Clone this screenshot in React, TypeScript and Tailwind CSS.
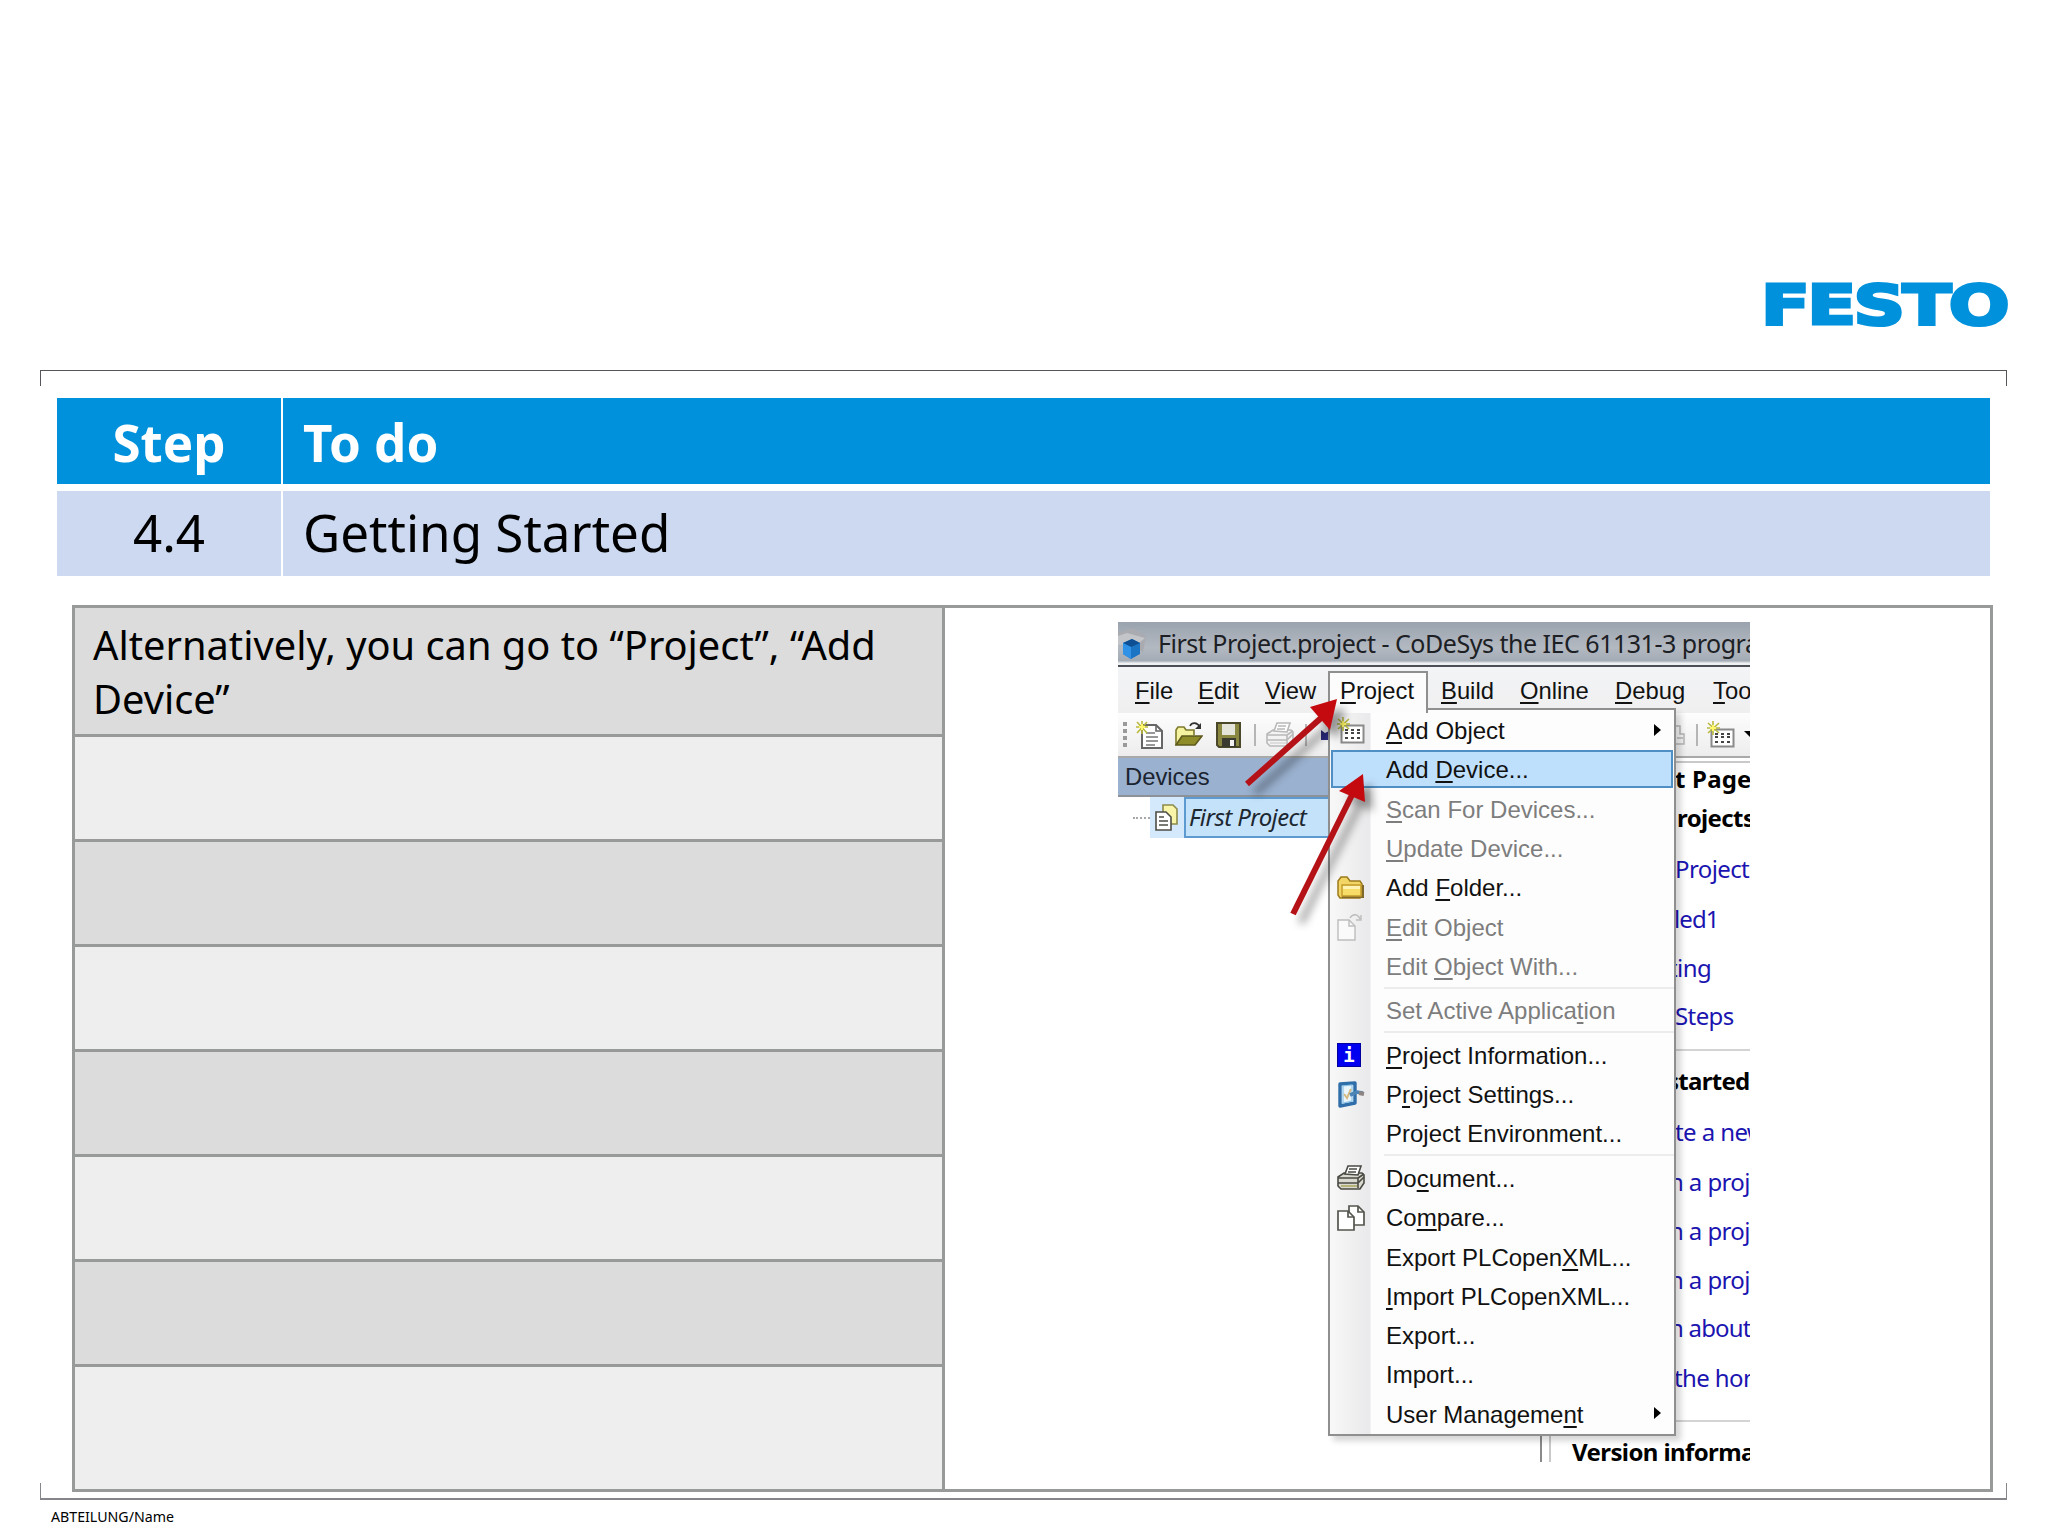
import type { ReactNode } from 'react';

type MenuEntry = {
  label?: ReactNode;
  icon?: ReactNode;
  disabled?: boolean;
  active?: boolean;
  submenu?: boolean;
};

function K({ children }: { children: ReactNode }) {
  return <span className="underline decoration-2 underline-offset-[3px] [text-decoration-skip-ink:none]">{children}</span>;
}

function GridIcon() {
  return (
    <svg width="28" height="28" viewBox="0 0 28 28" fill="none">
      <rect x="4.5" y="8.5" width="22" height="17" fill="#fff" stroke="#8a8a8a" strokeWidth="2" />
      <path d="M8 13h3M14 13h3M20 13h3M8 16h3M14 16h3M20 16h3M8 21h3M14 21h3M20 21h3" stroke="#444" strokeWidth="2" />
      <path d="M6 0v14M0 7h13M1 2l11 10M12 2L1 12" stroke="#b9b93c" strokeWidth="1.6" />
      <path d="M6 4v6M3 7h6" stroke="#fff86a" strokeWidth="2" />
    </svg>
  );
}

function NewIcon() {
  return (
    <svg width="28" height="28" viewBox="0 0 28 28" fill="none">
      <path d="M6 4h14l6 6v17H6z" fill="#fff" stroke="#666" strokeWidth="2" />
      <path d="M20 4v6h6" stroke="#666" strokeWidth="1.6" />
      <path d="M10 12h9M10 16h12M10 20h12M10 24h9" stroke="#777" strokeWidth="1.5" />
      <path d="M6 0v13M0 6h12M1 1l10 11M11 1L1 12" stroke="#b9b93c" strokeWidth="1.6" />
      <path d="M6 3v6M3 6h6" stroke="#fff86a" strokeWidth="2" />
    </svg>
  );
}

function OpenIcon() {
  return (
    <svg width="28" height="28" viewBox="0 0 28 28" fill="none">
      <path d="M1 24V9l2-3h6l2 3h8v5" fill="#f6f3a0" stroke="#7c7a2c" strokeWidth="1.6" />
      <path d="M1 24l6-9h20l-7 9z" fill="#8f8c2a" stroke="#5d5a1c" strokeWidth="1.6" />
      <path d="M15 5c2-4 7-4 10 1" stroke="#333" strokeWidth="1.6" />
      <path d="M26 2v6h-6z" fill="#333" />
    </svg>
  );
}

function SaveIcon() {
  return (
    <svg width="26" height="26" viewBox="0 0 26 26">
      <path d="M1 1h23v24H3l-2-2z" fill="#8a8740" stroke="#4a4828" strokeWidth="2" />
      <rect x="6" y="2" width="13" height="11" fill="#e4e4da" />
      <rect x="6" y="16" width="14" height="9" fill="#3b3a30" />
      <rect x="14" y="18" width="4" height="6" fill="#f2f2f2" />
    </svg>
  );
}

function PrinterIcon({ faded }: { faded?: boolean }) {
  const line = faded ? '#b9b9b9' : '#4a4a44';
  return (
    <svg width="28" height="26" viewBox="0 0 28 26" fill="none">
      <path d="M1 12l6-4h18l2 2v8l-4 6H4l-3-3z" fill={faded ? '#f3f3f3' : '#d9d9cf'} stroke={line} strokeWidth="1.6" />
      <path d="M8 9l3-8h13l-3 9z" fill="#fff" stroke={line} strokeWidth="1.6" />
      <path d="M12 4h8M11 7h8" stroke={line} strokeWidth="1.4" />
      <path d="M1 13h20v10M21 13l6-4M1 18h20l6-6" stroke={line} strokeWidth="1.6" />
      <path d="M4 21h16" stroke={faded ? '#ddd' : '#b5b377'} strokeWidth="2" />
    </svg>
  );
}

function FolderIcon() {
  return (
    <svg width="28" height="23" viewBox="0 0 28 23">
      <path d="M1 19V5l3-4h6l3 4h10l2 3v12l-2 2H3z" fill="#f3d566" stroke="#9c7a1c" strokeWidth="1.5" />
      <path d="M26 9v12H5" fill="none" stroke="#80682a" strokeWidth="2" />
      <path d="M5 9h19v11H5z" fill="#f7dc67" stroke="#c29a2b" strokeWidth="1.4" />
      <path d="M6 10h17v3H6z" fill="#fff3b4" />
    </svg>
  );
}

function EditIcon() {
  return (
    <svg width="26" height="27" viewBox="0 0 26 27" fill="none" stroke="#bdbdbd" strokeWidth="1.4">
      <path d="M1 6h11l6 6v14H1z" fill="#fafafa" />
      <path d="M12 6v6h6" />
      <path d="M13 4c3-5 8-4 10 1M24 1v5h-5" />
    </svg>
  );
}

function InfoIcon() {
  return (
    <div className="flex h-6 w-6 items-center justify-center border border-[#0000a0] bg-[#0000f0] font-['DejaVu_Sans_Mono',monospace] text-[19px] font-bold leading-none text-white">
      i
    </div>
  );
}

function SettingsIcon() {
  return (
    <svg width="28" height="27" viewBox="0 0 28 27" fill="none">
      <path d="M3 3l15-1v20L3 25z" fill="#e9f4fb" stroke="#2f6ea8" strokeWidth="3.4" strokeLinejoin="round" />
      <path d="M6 5l9-1v16l-9 2z" stroke="#8cc4ea" strokeWidth="1.2" />
      <path d="M7 13l3 4 4-9" stroke="#d5b980" strokeWidth="2" />
      <path d="M13 14l7-3 6 1" stroke="#4b84b5" strokeWidth="3.6" />
      <path d="M22 12l5 1" stroke="#8c8583" strokeWidth="4" />
    </svg>
  );
}

function CompareIcon() {
  return (
    <svg width="28" height="26" viewBox="0 0 28 26" fill="#fff" stroke="#55554f" strokeWidth="1.7">
      <path d="M12 1h9l6 6v13H12z" />
      <path d="M21 1v6h6" fill="none" />
      <path d="M1 6h10l6 6v13H1z" />
      <path d="M11 6v6h6" fill="none" />
    </svg>
  );
}

function ProjectIcon() {
  return (
    <svg width="24" height="27" viewBox="0 0 24 27" stroke="#4e4e46" strokeWidth="1.6">
      <path d="M8 1h10l4 4v15H8z" fill="#f8f5a8" stroke="#8c8a4a" />
      <path d="M1 8h10l5 5v13H1z" fill="#fff" />
      <path d="M4 13h5M4 17h9M4 21h9" />
    </svg>
  );
}

function CubeIcon() {
  return (
    <svg className="shrink-0" width="30" height="38" viewBox="0 0 30 38">
      <path d="M0 8L14 3l14 8-3 16-10-5L0 19z" fill="#a9abb0" />
      <path d="M0 11l9-3 18 5-7 6L0 20z" fill="#c3c5c9" />
      <path d="M5 18l9-4 8 4v11l-9 5-8-5z" fill="#1c74c4" />
      <path d="M5 18l9-4 8 4-9 4z" fill="#0d4f92" />
      <path d="M13 22v12l-8-5V18z" fill="#2f92e6" />
    </svg>
  );
}

const separator: MenuEntry = {};

const entries: MenuEntry[] = [
  { label: <><K>A</K>dd Object</>, icon: <GridIcon />, submenu: true },
  { label: <>Add <K>D</K>evice...</>, active: true },
  { label: <><K>S</K>can For Devices...</>, disabled: true },
  { label: <><K>U</K>pdate Device...</>, disabled: true },
  { label: <>Add <K>F</K>older...</>, icon: <FolderIcon /> },
  { label: <><K>E</K>dit Object</>, icon: <EditIcon />, disabled: true },
  { label: <>Edit <K>O</K>bject With...</>, disabled: true },
  separator,
  { label: <>Set Active Applica<K>t</K>ion</>, disabled: true },
  separator,
  { label: <><K>P</K>roject Information...</>, icon: <InfoIcon /> },
  { label: <>P<K>r</K>oject Settings...</>, icon: <SettingsIcon /> },
  { label: <>Project Environment...</> },
  separator,
  { label: <>Do<K>c</K>ument...</>, icon: <PrinterIcon /> },
  { label: <>Co<K>m</K>pare...</>, icon: <CompareIcon /> },
  { label: <>Export PLCopen<K>X</K>ML...</> },
  { label: <><K>I</K>mport PLCopenXML...</> },
  { label: <>Export...</> },
  { label: <>Import...</> },
  { label: <>User Manageme<K>n</K>t</>, submenu: true },
];

function DropdownMenu() {
  return (
    <div className="absolute left-[210px] top-[86px] h-[728px] w-[348px] border-2 border-[#8f8f8f] bg-[linear-gradient(90deg,#f8f8f8_0,#e9e9eb_40px,#fdfdfd_41px)] shadow-[5px_5px_6px_rgba(0,0,0,0.16)]">
      {entries.map((e, i) =>
        e.label ? (
          <div key={i} className="h-[39.3px] px-px py-px">
            <div className={`flex h-full items-center border-2 ${e.active ? 'border-[#4f8fc4] bg-[#bfe0fd]' : 'border-transparent'}`}>
              <div className="flex w-[53px] shrink-0 items-center pl-[4px] pt-[2px]">{e.icon}</div>
              <div className={`flex-1 whitespace-nowrap pt-[3px] text-[24px] leading-none ${e.disabled ? 'text-[#7d7d7d]' : 'text-[#111]'}`}>
                {e.label}
              </div>
              {e.submenu && <div className="mr-[10px] h-0 w-0 border-y-[6px] border-l-[7px] border-y-transparent border-l-black" />}
            </div>
          </div>
        ) : (
          <div key={i} className="flex h-[5.2px] items-center pl-[54px]">
            <div className="h-[2px] w-full bg-[#ececec]" />
          </div>
        )
      )}
    </div>
  );
}

function MenuBar() {
  return (
    <div className="flex h-[46px] shrink-0 items-center bg-[linear-gradient(#f3f4f6,#efeff0)] pl-[17px] pt-[2px] text-[23.8px] leading-none text-[#111]">
      <div className="w-[63px] shrink-0"><K>F</K>ile</div>
      <div className="w-[67px] shrink-0"><K>E</K>dit</div>
      <div className="w-[63px] shrink-0"><K>V</K>iew</div>
      <div className="relative z-10 flex h-[42px] w-[100px] shrink-0 items-center self-end border-2 border-b-0 border-[#8f8f8f] bg-[#fcfcfc] pb-[4px] pl-[10px]">
        <span><K>P</K>roject</span>
      </div>
      <div className="w-[80px] shrink-0 pl-[13px]"><K>B</K>uild</div>
      <div className="ml-[12px] w-[95px] shrink-0"><K>O</K>nline</div>
      <div className="w-[98px] shrink-0"><K>D</K>ebug</div>
      <div className="shrink-0"><K>T</K>ools</div>
    </div>
  );
}

function Toolbar() {
  return (
    <div className="flex h-[45px] shrink-0 items-center border-b-2 border-[#a9a9a9] bg-[linear-gradient(#fdfdfd,#ededed)] pl-[5px]">
      <div className="flex w-[13px] shrink-0 flex-col gap-[3px]">
        <i className="h-1 w-1 bg-[#9a9a9a]" />
        <i className="h-1 w-1 bg-[#9a9a9a]" />
        <i className="h-1 w-1 bg-[#9a9a9a]" />
        <i className="h-1 w-1 bg-[#9a9a9a]" />
      </div>
      <div className="w-[39px] shrink-0"><NewIcon /></div>
      <div className="w-[41px] shrink-0"><OpenIcon /></div>
      <div className="w-[38px] shrink-0"><SaveIcon /></div>
      <div className="h-[22px] w-[2px] shrink-0 bg-[#b5b5b5]" />
      <div className="w-[49px] shrink-0 pl-[10px]"><PrinterIcon faded /></div>
      <div className="h-[22px] w-[2px] shrink-0 bg-[#b5b5b5]" />
      <svg className="ml-[14px] shrink-0" width="10" height="12" viewBox="0 0 10 12">
        <path d="M0 1l4 3 6-3v10H0z" fill="#2b2b80" />
      </svg>
      <div className="ml-[345px] w-[20px] shrink-0">
        <svg width="10" height="24" viewBox="0 0 10 24" fill="none" stroke="#b5b5b5" strokeWidth="1.5">
          <path d="M0 3h4v8h4v10H0M1 15h6" />
        </svg>
      </div>
      <div className="h-[22px] w-[2px] shrink-0 bg-[#b5b5b5]" />
      <div className="w-[46px] shrink-0 pl-[9px]"><GridIcon /></div>
      <div className="h-0 w-0 shrink-0 border-x-[7px] border-t-[7px] border-x-transparent border-t-black" />
    </div>
  );
}

function StartLine({ children, className }: { children: ReactNode; className: string }) {
  return <div className={`flex shrink-0 items-end whitespace-pre leading-[30px] ${className}`}>{children}</div>;
}

function StartPage() {
  return (
    <div className="flex w-[210px] shrink-0 flex-col border-l-2 border-[#8a8a8a] pl-[7px] pt-[3px]">
      <div className="flex grow flex-col border-l-2 border-t-2 border-[#c9c9c9] bg-white pl-[124px] font-['Noto_Sans',sans-serif] text-[24px] tracking-[-0.6px] text-[#1b14b0]">
        <StartLine className="h-[31px] font-bold tracking-[0.2px] text-black">t Page</StartLine>
        <StartLine className="h-[39px] pl-[2px] font-bold text-black">rojects</StartLine>
        <StartLine className="h-[51px]">Project</StartLine>
        <StartLine className="-ml-px h-[50px] tracking-[-0.9px]">led1</StartLine>
        <StartLine className="-ml-[6px] h-[49px]">ting</StartLine>
        <StartLine className="h-[48px]">Steps</StartLine>
        <div className="h-[18px] shrink-0" />
        <StartLine className="-ml-[8px] h-[47px] border-t-2 border-[#d4d4d4] font-bold tracking-[-0.7px] text-black">started</StartLine>
        <StartLine className="h-[51px]">te a new</StartLine>
        <StartLine className="-ml-[6px] h-[50px] tracking-[-0.6px]">n a proj</StartLine>
        <StartLine className="-ml-[6px] h-[49px] tracking-[-0.6px]">n a proj</StartLine>
        <StartLine className="-ml-[6px] h-[49px] tracking-[-0.6px]">n a proj</StartLine>
        <StartLine className="-ml-[6px] h-[48px] tracking-[-0.8px]">n about</StartLine>
        <StartLine className="-ml-[1px] h-[50px]">the home</StartLine>
        <div className="h-[27px] shrink-0" />
        <StartLine className="-ml-[103px] h-[47px] border-t-2 border-[#d4d4d4] font-bold text-black">Version information</StartLine>
      </div>
    </div>
  );
}

function Arrows() {
  return (
    <svg className="absolute left-0 top-0 z-20 drop-shadow-[8px_9px_4px_rgba(0,0,0,0.4)]" width="632" height="840" viewBox="0 0 632 840">
      <path d="M129 162L203 96" stroke="#b51217" strokeWidth="6" />
      <path d="M219 77L192 85L212 108Z" fill="#c4090f" />
      <path d="M175 292L234 173" stroke="#b51217" strokeWidth="6" />
      <path d="M245 152L221 169L247 180Z" fill="#c4090f" />
    </svg>
  );
}

function CodesysWindow() {
  return (
    <div className="relative flex h-[840px] w-[632px] flex-col overflow-hidden bg-white font-['Liberation_Sans',Arial,sans-serif]">
      <div className="flex h-[45px] shrink-0 items-center border-b-2 border-[#4b4f55] bg-[linear-gradient(#9aa3ae,#b3b9c1_60%,#a3abb5_90%,#eef0f2_96%)]">
        <CubeIcon />
        <div className="ml-[10px] whitespace-nowrap font-['Noto_Sans',sans-serif] text-[25px] tracking-[-0.48px] text-[#1c2024]">
          First Project.project - CoDeSys the IEC 61131-3 programming
        </div>
      </div>
      <MenuBar />
      <Toolbar />
      <div className="flex min-h-0 grow justify-between">
        <div className="w-[212px]">
          <div className="flex h-[39px] items-center border-b-2 border-[#8d9299] bg-[#9ab1cf] pl-[7px] text-[23.8px] leading-none text-[#1b2430]">Devices</div>
          <div className="flex h-[41px] items-center">
            <div className="ml-[15px] w-[17px] border-t-2 border-dotted border-[#a8a8a8]" />
            <div className="flex h-full w-[34px] items-center bg-[#d4e9fc] pl-[5px]"><ProjectIcon /></div>
            <div className="flex h-full grow items-center whitespace-nowrap border-2 border-[#5d9ad0] bg-[#c5e2fb] pb-[2px] pl-[3px] font-['Noto_Sans',sans-serif] text-[24px] italic tracking-[-0.6px] text-[#1c2730]">
              First Project
            </div>
          </div>
        </div>
        <StartPage />
      </div>
      <DropdownMenu />
      <div className="absolute left-[212px] top-[84px] z-10 h-[5px] w-[96px] bg-[#fcfcfc]" />
      <Arrows />
    </div>
  );
}

export default function App() {
  return (
    <div className="flex h-[1536px] w-[2048px] flex-col bg-white font-['Noto_Sans',sans-serif] text-black">
      <header className="flex h-[370px] shrink-0 justify-end pr-[41px] pt-[282px]">
        <svg width="242" height="45" viewBox="0 0 242 45" className="overflow-visible">
          <text
            x="-4"
            y="41.5"
            textLength="246"
            lengthAdjust="spacingAndGlyphs"
            className="fill-[#0091dc] stroke-[#0091dc] stroke-3 font-['DejaVu_Sans',sans-serif] text-[56px] font-bold tracking-[-2px]"
          >
            FESTO
          </text>
        </svg>
      </header>

      <div className="ml-[40px] h-4 w-[1967px] shrink-0 border-x border-t border-[#55555a]" />

      <div className="ml-[57px] mt-[12px] grid w-[1933px] shrink-0 grid-cols-[224px_1fr] gap-x-[2px] gap-y-[7px] text-[51.1px] leading-none">
        <div className="flex h-[86px] items-center justify-center bg-[#0091dc] pt-[4px] font-bold text-white">Step</div>
        <div className="flex h-[86px] items-center bg-[#0091dc] pl-[20px] pt-[4px] font-bold text-white">To do</div>
        <div className="flex h-[85px] items-center justify-center bg-[#ccd9f0] pb-px">4.4</div>
        <div className="flex h-[85px] items-center bg-[#ccd9f0] pb-px pl-[20px]">Getting Started</div>
      </div>

      <div className="ml-[72px] mt-[29px] flex h-[887px] w-[1921px] shrink-0 gap-[3px] border-[3px] border-[#989a9a] bg-[#989a9a]">
        <div className="grid w-[867px] shrink-0 grid-rows-[126px_102px_102px_102px_102px_102px_102px_1fr] gap-[3px]">
          <div className="bg-[#dcdcdc] pl-[18px] pt-[9.5px] text-[39.8px] leading-[54.4px]">
            Alternatively, you can go to “Project”, “Add
            <br />
            Device”
          </div>
          <div className="bg-[#eee]" />
          <div className="bg-[#dcdcdc]" />
          <div className="bg-[#eee]" />
          <div className="bg-[#dcdcdc]" />
          <div className="bg-[#eee]" />
          <div className="bg-[#dcdcdc]" />
          <div className="bg-[#eee]" />
        </div>
        <div className="grow bg-white pl-[173px] pt-[14px]">
          <CodesysWindow />
        </div>
      </div>

      <div className="ml-[40px] -mt-[9px] h-[17px] w-[1967px] shrink-0 border-x border-b-2 border-[#85868a]" />
      <footer className="pl-[51px] pt-[7px] text-[14.2px] leading-5">ABTEILUNG/Name</footer>
    </div>
  );
}
